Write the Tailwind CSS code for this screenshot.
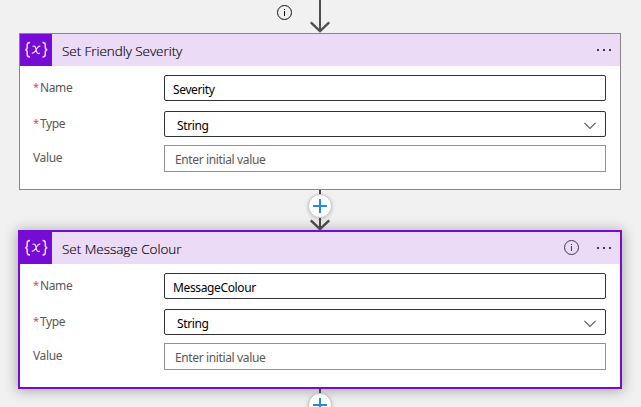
<!DOCTYPE html>
<html lang="en">
<head>
<meta charset="utf-8">
<title>Flow designer</title>
<script src="https://cdn.jsdelivr.net/npm/@tailwindcss/browser@4"></script>
</head>
<body class="h-[407px] w-[641px] overflow-hidden bg-[#f1f1f1] font-['Noto_Sans','Open_Sans',sans-serif] text-[12px] leading-4 tracking-[-0.37px] text-[#5a5856]">
<main class="flex flex-col">
  <div class="relative flex h-[33px] justify-center">
    <svg class="absolute left-[276px] top-[4px] size-4" viewBox="0 0 16 16" fill="none" stroke="#111"><circle cx="8.500" cy="8.500" r="7"/><path d="M8.500 7v5M8.500 5v1"/></svg>
    <svg class="ml-[-1px] h-[33px] w-6" viewBox="0 0 24 33" fill="none" stroke="#505050" stroke-width="2"><path d="M12 0v31"/><path d="M2.800 22.400 12 31.200l9.200-8.800" stroke-width="2.400"/></svg>
  </div>

  <section class="ml-[19px] h-[157px] w-[602px] border border-[#8a8486] bg-white">
    <header class="flex h-8 items-center bg-[#ebdbf7]">
      <div class="flex size-8 items-center justify-center bg-[#770bd6]">
        <svg class="size-8" viewBox="0 0 32 32" fill="none" stroke="#eadcf8" stroke-width="1.500"><path d="M10 8.500c-2.300 0-2.800.8-2.800 2.500v2.300c0 1.600-.6 2.300-1.900 2.500 1.300.2 1.900.9 1.900 2.500v2.300c0 1.700.5 2.500 2.800 2.500M22.500 8.500c2.300 0 2.800.8 2.800 2.500v2.300c0 1.600.6 2.300 1.900 2.500-1.300.2-1.900.9-1.900 2.500v2.300c0 1.700-.5 2.500-2.800 2.500"/><path d="M12.500 12.500c2-1.200 2.700-.2 3.300 2 .7 3.200 1.300 6.300 4 4.500M20.300 12.200c-2.500-.4-3.700 2.600-4.700 4.300s-2 3.300-3.800 2.500" stroke-width="1.200"/></svg>
      </div>
      <h2 class="ml-[10px] mt-[1px] flex-1 whitespace-nowrap font-['Open_Sans'] text-[13.500px] font-light tracking-[-0.06px] text-black [-webkit-text-stroke:0.15px_#000]">Set Friendly Severity</h2>
      <svg class="mr-[8px] h-[2px] w-[15px]" viewBox="0 0 15 2" fill="#3f3946"><path d="M0 0h2v2H0zM6 0h2v2H6zM12 0h2v2h-2z"/></svg>
    </header>
    <div class="flex flex-col pl-[13px] pt-[9px]">
      <div class="flex h-[26px]"><div class="flex w-[131px] pt-[5px]"><span class="-mt-[1px] w-[7px] text-[11px] text-[#f0404c]">*</span><span>Name</span></div><div class="h-[26px] w-[442px] rounded-[2px] border border-[#343236] pl-[8px] pt-[6px] text-black">Severity</div></div>
      <div class="mt-[10px] flex h-[26px]"><div class="flex w-[131px] pt-[5px]"><span class="-mt-[1px] w-[7px] text-[11px] text-[#f0404c]">*</span><span>Type</span></div><div class="flex h-[26px] w-[442px] justify-between rounded-[2px] border border-[#343236] pl-[12px] pr-[9px] pt-[6px] text-black"><span>String</span><svg class="mt-[4px] h-[8px] w-[12px]" viewBox="0 0 12 8" fill="none" stroke="#605e5c" stroke-width="1.200"><path d="m.4.800 5.600 5.600L11.600.8"/></svg></div></div>
      <div class="mt-[8px] flex h-[27px]"><div class="w-[131px] pt-[5px]">Value</div><div class="h-[27px] w-[442px] border border-[#949296] pl-[10px] pt-[6px]">Enter initial value</div></div>
    </div>
  </section>

  <div class="relative flex h-[40px] justify-center">
    <svg class="z-10 ml-[-1px] h-[41px] w-6" viewBox="0 0 24 41" fill="none" stroke="#484848" stroke-width="2"><path d="M12 0v38"/><path d="M2.800 30.400 12 39.200l9.200-8.800" stroke-width="2.400"/></svg>
    <div class="absolute left-[308px] top-[4px] z-20 flex size-[24px] items-center justify-center rounded-full border border-[#c8c8c8] bg-white shadow-[0_1px_4px_rgba(0,0,0,0.2)]"><svg class="size-[14px]" viewBox="0 0 14 14" stroke="#2b8ad8" stroke-width="2"><path d="M7 0v14M0 7h14"/></svg></div>
  </div>

  <section class="ml-[18px] h-[159px] w-[604px] border-2 border-[#770bd6] bg-white shadow-[0_1px_12px_1px_rgba(0,0,0,0.300)]">
    <header class="flex h-8 items-center bg-[#ebdbf7]">
      <div class="flex size-8 items-center justify-center bg-[#770bd6]">
        <svg class="size-8" viewBox="0 0 32 32" fill="none" stroke="#eadcf8" stroke-width="1.500"><path d="M10 8.500c-2.300 0-2.800.8-2.800 2.500v2.300c0 1.600-.6 2.300-1.900 2.500 1.300.2 1.900.9 1.900 2.500v2.300c0 1.700.5 2.500 2.800 2.500M22.500 8.500c2.300 0 2.800.8 2.800 2.500v2.300c0 1.600.6 2.300 1.900 2.500-1.300.2-1.900.9-1.900 2.500v2.300c0 1.700-.5 2.500-2.800 2.500"/><path d="M12.500 12.500c2-1.200 2.700-.2 3.300 2 .7 3.200 1.300 6.300 4 4.500M20.300 12.200c-2.500-.4-3.700 2.600-4.700 4.300s-2 3.300-3.800 2.500" stroke-width="1.200"/></svg>
      </div>
      <h2 class="ml-[10px] mt-[1px] flex-1 whitespace-nowrap font-['Open_Sans'] text-[13.500px] font-light tracking-[-0.03px] text-black [-webkit-text-stroke:0.15px_#000]">Set Message Colour</h2>
      <svg class="mb-[2px] mr-[18px] size-4" viewBox="0 0 16 16" fill="none" stroke="#3f3946"><circle cx="8.500" cy="8.500" r="7"/><path d="M8.500 7v5M8.500 5v1"/></svg>
      <svg class="mr-[8px] h-[2px] w-[15px]" viewBox="0 0 15 2" fill="#3f3946"><path d="M0 0h2v2H0zM6 0h2v2H6zM12 0h2v2h-2z"/></svg>
    </header>
    <div class="flex flex-col pl-[13px] pt-[9px]">
      <div class="flex h-[26px]"><div class="flex w-[131px] pt-[5px]"><span class="-mt-[1px] w-[7px] text-[11px] text-[#f0404c]">*</span><span>Name</span></div><div class="h-[26px] w-[442px] rounded-[2px] border border-[#343236] pl-[8px] pt-[6px] text-black">MessageColour</div></div>
      <div class="mt-[10px] flex h-[26px]"><div class="flex w-[131px] pt-[5px]"><span class="-mt-[1px] w-[7px] text-[11px] text-[#f0404c]">*</span><span>Type</span></div><div class="flex h-[26px] w-[442px] justify-between rounded-[2px] border border-[#343236] pl-[12px] pr-[9px] pt-[6px] text-black"><span>String</span><svg class="mt-[4px] h-[8px] w-[12px]" viewBox="0 0 12 8" fill="none" stroke="#605e5c" stroke-width="1.200"><path d="m.4.800 5.600 5.600L11.600.8"/></svg></div></div>
      <div class="mt-[8px] flex h-[27px]"><div class="w-[131px] pt-[5px]">Value</div><div class="h-[27px] w-[442px] border border-[#949296] pl-[10px] pt-[6px]">Enter initial value</div></div>
    </div>
  </section>

  <div class="relative flex h-[18px] justify-center">
    <div class="ml-[-1px] h-[18px] w-[2px] bg-[#484848]"></div>
    <div class="absolute left-[308px] top-[4px] flex size-[24px] items-center justify-center rounded-full border border-[#c8c8c8] bg-white shadow-[0_1px_4px_rgba(0,0,0,0.2)]"><svg class="size-[14px]" viewBox="0 0 14 14" stroke="#2b8ad8" stroke-width="2"><path d="M7 0v14M0 7h14"/></svg></div>
  </div>
</main>
</body>
</html>
